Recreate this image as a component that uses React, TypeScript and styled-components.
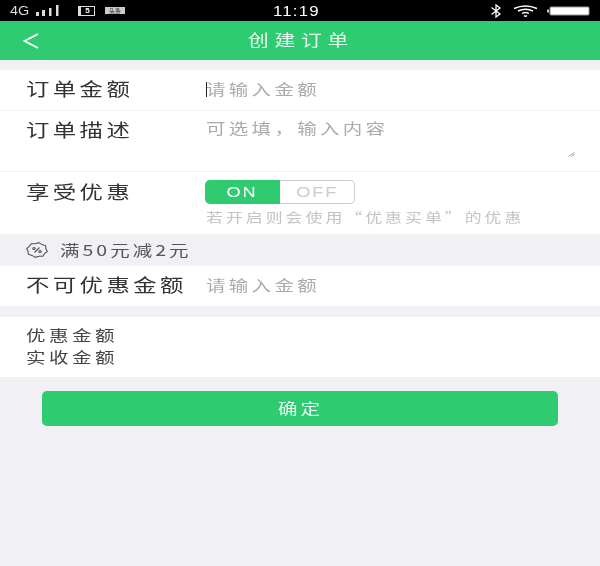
import React from 'react';
import styled, { createGlobalStyle } from 'styled-components';

const FONT = `"Noto Sans CJK SC", "Liberation Sans", sans-serif`;
const GREEN = '#2fcb70';

const GlobalStyle = createGlobalStyle`
  html, body {
    margin: 0;
    padding: 0;
    background: #f0f0f5;
  }
`;

const Page = styled.div`
  width: 600px;
  height: 566px;
  overflow: hidden;
  background: #f0f0f5;
  font-family: ${FONT};
  filter: blur(0.45px);
`;

// The whole screenshot is stretched sideways, so the text is too
const Wide = styled.span<{ $size: number; $pitch: number; $color: string }>`
  display: inline-block;
  font-size: ${(p) => p.$size}px;
  letter-spacing: ${(p) => p.$pitch / 1.3 - p.$size}px;
  color: ${(p) => p.$color};
  line-height: 1;
  white-space: nowrap;
  transform: scaleX(1.3);
  transform-origin: left center;
`;

const StatusBar = styled.div`
  height: 21px;
  background: #000;
  display: grid;
  grid-template-columns: 1fr auto 1fr;
  align-items: center;
  color: #fff;
`;

const StatusLeft = styled.div`
  display: flex;
  align-items: center;
  padding-left: 10px;
`;

const NetworkText = styled.span`
  font-family: "Liberation Sans", sans-serif;
  font-size: 12px;
  width: 26px;
  transform: scaleX(1.2);
  transform-origin: left center;
  color: #ddd;
`;

const StatusRight = styled.div`
  display: flex;
  align-items: center;
  justify-content: flex-end;
  padding-right: 10px;
`;

const Clock = styled.span`
  font-family: "Liberation Sans", sans-serif;
  font-size: 14px;
  width: 52px;
  letter-spacing: 1px;
  transform: scaleX(1.2);
  transform-origin: left center;
  margin-right: 2px;
`;

const SimBox = styled.span`
  display: flex;
  align-items: center;
  justify-content: center;
  box-sizing: border-box;
  width: 17px;
  height: 10px;
  margin-left: 18px;
  border: 1px solid #ddd;
  border-left-width: 3px;
  font-family: "Liberation Sans", sans-serif;
  font-size: 8px;
  font-weight: 700;
  line-height: 1;
`;

const NewsBadge = styled.span`
  display: flex;
  align-items: center;
  justify-content: center;
  width: 20px;
  height: 7px;
  margin-left: 10px;
  background: #ccc;
  color: #222;
  font-size: 6px;
  line-height: 1;
  overflow: hidden;
`;

const Spacer = styled.span<{ $width: number }>`
  width: ${(p) => p.$width}px;
`;

const Header = styled.header`
  position: relative;
  height: 39px;
  background: ${GREEN};
  display: flex;
  align-items: center;
  justify-content: center;
`;

const BackIcon = styled.svg`
  position: absolute;
  left: 23px;
  top: 12px;
`;

const TitleSlot = styled.div`
  width: 104px;
  padding-bottom: 3px;
`;

const Section = styled.section<{ $gap?: number }>`
  background: #fff;
  margin-top: ${(p) => p.$gap || 0}px;
`;

const Row = styled.div<{ $height: number; $divider?: boolean }>`
  position: relative;
  height: ${(p) => p.$height}px;
  box-sizing: border-box;
  display: grid;
  grid-template-columns: 180px 1fr;
  padding-left: 26px;
  align-content: start;
  border-bottom: ${(p) => (p.$divider ? '1px solid #f3f3f6' : '0')};
`;

const Cell = styled.div<{ $top: number }>`
  padding-top: ${(p) => p.$top}px;
  display: flex;
  flex-direction: column;
  align-items: flex-start;
`;

const Caret = styled.span`
  position: absolute;
  left: 206px;
  top: 12px;
  width: 1px;
  height: 15px;
  background: #222;
`;

const ResizeGrip = styled.svg`
  position: absolute;
  right: 25px;
  bottom: 14px;
`;

const Toggle = styled.div`
  display: flex;
  width: 150px;
  height: 24px;
  margin-left: -1px;
  margin-bottom: 6px;
`;

const ToggleSide = styled.div<{ $on?: boolean }>`
  flex: 1;
  box-sizing: border-box;
  display: flex;
  align-items: center;
  justify-content: center;
  background: ${(p) => (p.$on ? GREEN : '#fff')};
  color: ${(p) => (p.$on ? '#fff' : '#ccc')};
  border: ${(p) => (p.$on ? '0' : '1px solid #ccc')};
  border-left: 0;
  border-radius: ${(p) => (p.$on ? '5px 0 0 5px' : '0 5px 5px 0')};
  font-family: "Liberation Sans", sans-serif;
  font-size: 14px;
  letter-spacing: 1.5px;

  span {
    transform: scaleX(1.3);
  }
`;

const CouponBar = styled.div`
  height: 32px;
  padding-left: 26px;
  display: flex;
  align-items: center;
  gap: 12px;
`;

const CouponText = styled.div`
  padding-bottom: 3px;
`;

const Totals = styled.div`
  height: 60px;
  padding: 10px 0 0 26px;
  box-sizing: border-box;
  display: flex;
  flex-direction: column;
  gap: 7px;
`;

const SubmitButton = styled.button`
  display: flex;
  align-items: center;
  width: 516px;
  height: 35px;
  margin: 14px 0 0 42px;
  padding: 0 0 3px 236px;
  border: 0;
  border-radius: 5px;
  background: ${GREEN};
  font-family: ${FONT};
`;

const SignalBars = () => (
  <svg width="24" height="12" viewBox="0 0 24 12">
    <rect x="0" y="7" width="3" height="4" fill="#ddd" />
    <rect x="6" y="5" width="3" height="6" fill="#ddd" />
    <rect x="13" y="3" width="2.5" height="8" fill="#ddd" />
    <rect x="20" y="0" width="2.5" height="11" fill="#ddd" />
  </svg>
);

const BluetoothGlyph = () => (
  <svg width="12" height="14" viewBox="0 0 12 14" fill="none" stroke="#fff" strokeWidth="1.3">
    <path d="M1.5 3.5 L10 10 L6 13 V1 L10 4 L1.5 10.5" />
  </svg>
);

const WifiGlyph = () => (
  <svg width="25" height="12" viewBox="0 0 25 12" fill="none" stroke="#fff" strokeWidth="1.4">
    <path d="M1 3.5 Q12.5 -1.5 24 3.5" />
    <path d="M5 6 Q12.5 2.5 20 6" />
    <path d="M9 8.5 Q12.5 6.5 16 8.5" />
    <path d="M11 10.5 L12.5 11.5 L14 10.5" />
  </svg>
);

const BatteryGlyph = () => (
  <svg width="43" height="10" viewBox="0 0 43 10">
    <rect x="0" y="3.5" width="2" height="3" fill="#ccc" />
    <rect x="3" y="1" width="39" height="8" rx="1" fill="#fff" stroke="#999" strokeWidth="1" />
  </svg>
);

// Scalloped badge outline, stretched like everything else
const gearPath = () => {
  const points: string[] = [];
  const teeth = 8;
  for (let i = 0; i < teeth * 2; i++) {
    const angle = (Math.PI * i) / teeth + Math.PI / teeth / 2;
    const radius = i % 2 === 0 ? 1 : 0.86;
    const x = 11 + Math.cos(angle) * radius * 10.5;
    const y = 8 + Math.sin(angle) * radius * 7.5;
    points.push(`${x.toFixed(1)} ${y.toFixed(1)}`);
  }
  return `M${points.join(' L')} Z`;
};

const CouponIcon = () => (
  <svg width="22" height="16" viewBox="0 0 22 16" fill="none" stroke="#555" strokeWidth="1.1" strokeLinejoin="round">
    <path d={gearPath()} />
    <path d="M8.5 10.5 L13.5 5.5" />
    <ellipse cx="8" cy="6.5" rx="1.2" ry="1" />
    <ellipse cx="14" cy="9.5" rx="1.2" ry="1" />
  </svg>
);

const App = () => {
  return (
    <Page>
      <GlobalStyle />
      <StatusBar>
        <StatusLeft>
          <NetworkText>4G</NetworkText>
          <SignalBars />
          <SimBox>5</SimBox>
          <NewsBadge>头条</NewsBadge>
        </StatusLeft>
        <Clock>11:19</Clock>
        <StatusRight>
          <BluetoothGlyph />
          <Spacer $width={11} />
          <WifiGlyph />
          <Spacer $width={9} />
          <BatteryGlyph />
        </StatusRight>
      </StatusBar>

      <Header>
        <BackIcon width="16" height="16" viewBox="0 0 16 16" fill="none" stroke="#fff" strokeWidth="1.8">
          <path d="M15 1 L1.5 8 L15 15" />
        </BackIcon>
        <TitleSlot>
          <Wide $size={16} $pitch={26.5} $color="#eafaf0">创建订单</Wide>
        </TitleSlot>
      </Header>

      <Section $gap={10}>
        <Row $height={41} $divider>
          <Cell $top={9}>
            <Wide $size={18} $pitch={26.8} $color="#333">订单金额</Wide>
          </Cell>
          <Cell $top={11}>
            <Wide $size={15} $pitch={22.8} $color="#aaa">请输入金额</Wide>
          </Cell>
          <Caret />
        </Row>
        <Row $height={61} $divider>
          <Cell $top={9}>
            <Wide $size={18} $pitch={26.8} $color="#333">订单描述</Wide>
          </Cell>
          <Cell $top={9}>
            <Wide $size={15} $pitch={22.8} $color="#aaa">可选填，输入内容</Wide>
          </Cell>
          <ResizeGrip width="7" height="5" viewBox="0 0 7 5" stroke="#888" strokeWidth="0.8">
            <path d="M0.5 4.5 L6.5 0.5 M3.5 4.5 L6.5 2.5" />
          </ResizeGrip>
        </Row>
        <Row $height={62}>
          <Cell $top={10}>
            <Wide $size={18} $pitch={26.8} $color="#333">享受优惠</Wide>
          </Cell>
          <Cell $top={8}>
            <Toggle>
              <ToggleSide $on><span>ON</span></ToggleSide>
              <ToggleSide><span>OFF</span></ToggleSide>
            </Toggle>
            <Wide $size={13} $pitch={19.9} $color="#c4c4c4">若开启则会使用“优惠买单”的优惠</Wide>
          </Cell>
        </Row>
      </Section>

      <CouponBar>
        <CouponIcon />
        <CouponText>
          <Wide $size={15} $pitch={22.5} $color="#555">满50元减2元</Wide>
        </CouponText>
      </CouponBar>

      <Section>
        <Row $height={40}>
          <Cell $top={9}>
            <Wide $size={18} $pitch={26.8} $color="#333">不可优惠金额</Wide>
          </Cell>
          <Cell $top={11}>
            <Wide $size={15} $pitch={22.8} $color="#aaa">请输入金额</Wide>
          </Cell>
        </Row>
      </Section>

      <Section $gap={11}>
        <Totals>
          <Wide $size={15} $pitch={23} $color="#444">优惠金额</Wide>
          <Wide $size={15} $pitch={23} $color="#444">实收金额</Wide>
        </Totals>
      </Section>

      <SubmitButton type="button">
        <Wide $size={15} $pitch={22.5} $color="#eafaf0">确定</Wide>
      </SubmitButton>
    </Page>
  );
};

export default App;
